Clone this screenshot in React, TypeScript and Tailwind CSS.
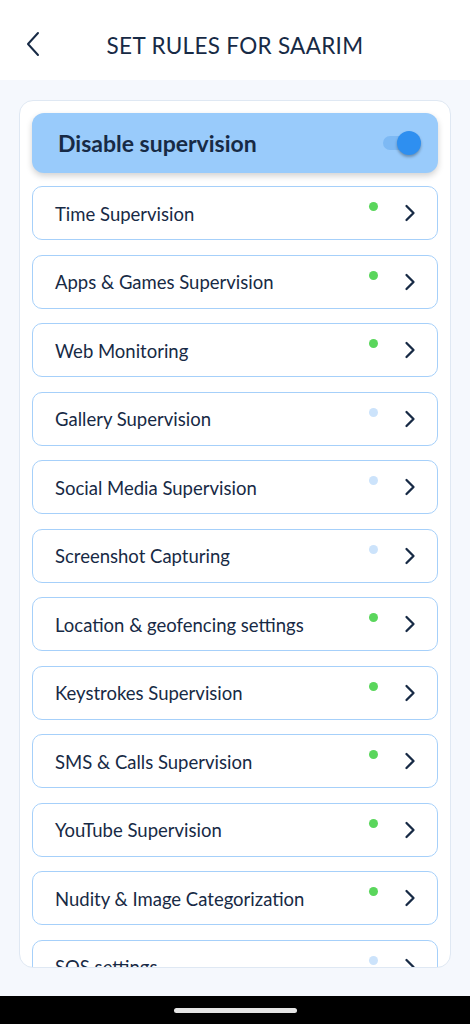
import React from 'react';

const rules = [
  { name: 'Time Supervision', active: true },
  { name: 'Apps & Games Supervision', active: true },
  { name: 'Web Monitoring', active: true },
  { name: 'Gallery Supervision', active: false },
  { name: 'Social Media Supervision', active: false },
  { name: 'Screenshot Capturing', active: false },
  { name: 'Location & geofencing settings', active: true },
  { name: 'Keystrokes Supervision', active: true },
  { name: 'SMS & Calls Supervision', active: true },
  { name: 'YouTube Supervision', active: true },
  { name: 'Nudity & Image Categorization', active: true },
  { name: 'SOS settings', active: false },
];

const Chevron = ({ className }: { className?: string }) => (
  <svg className={className} viewBox="0 0 12 18" fill="none" stroke="currentColor" strokeWidth="2.3" strokeLinecap="round" strokeLinejoin="round">
    <path d="M2.5 2l7 7-7 7" />
  </svg>
);

export default function App() {
  return (
    <div className="w-[470px] h-[1024px] flex flex-col bg-[#f5f8fd] text-[#172a45]" style={{ fontFamily: 'Lato, "Noto Sans", sans-serif' }}>
      {/* Header */}
      <div className="h-[80px] bg-white relative flex items-center justify-center shrink-0">
        <button className="absolute left-[22px] top-[31px] text-[#172a45]">
          <svg className="w-[24px] h-[26px]" viewBox="0 0 24 26" fill="none" stroke="currentColor" strokeWidth="2" strokeLinecap="round" strokeLinejoin="round">
            <path d="M16 2L6 13l10 11" />
          </svg>
        </button>
        <h1 className="text-[22.5px] tracking-[0.3px] mt-[11px]">SET RULES FOR SAARIM</h1>
      </div>

      {/* Body */}
      <div className="flex-1 px-[19px] pt-[20px] pb-[28px] min-h-0 flex flex-col">
        <div className="flex-1 min-h-0 bg-white border border-[#dfe8f3] rounded-[14px] overflow-hidden px-[12px] pt-[12px]">
          <div className="h-[60px] rounded-[12px] bg-[#99cbfb] shadow-[0_3px_6px_rgba(0,0,0,0.18)] flex items-center justify-between pl-[26px] pr-[17px]">
            <span className="text-[23px] font-bold">Disable supervision</span>
            <div className="relative w-[38px] h-[24px] flex items-center">
              <div className="w-[30px] h-[14px] rounded-full bg-[#7db9f4]" />
              <div className="absolute right-0 top-0 w-[24px] h-[24px] rounded-full bg-[#2e8ff0] shadow-[0_2px_3px_rgba(0,0,0,0.3)]" />
            </div>
          </div>

          <div className="mt-[13px] flex flex-col gap-[14.5px]">
            {rules.map((r) => (
              <div key={r.name} className="h-[54px] shrink-0 border border-[#a6d0fa] rounded-[10px] flex items-center pl-[22px] pr-[21px] relative">
                <span className="text-[18.5px] flex-1 pt-[3px]">{r.name}</span>
                <span className={`absolute left-[336px] top-[15px] w-[9px] h-[9px] rounded-full ${r.active ? 'bg-[#5ad65c]' : 'bg-[#cce3fb]'}`} />
                <Chevron className="w-[12px] h-[18px] text-[#172a45]" />
              </div>
            ))}
          </div>
        </div>
      </div>

      {/* Nav bar */}
      <div className="h-[28px] bg-black flex items-center justify-center shrink-0">
        <div className="w-[123px] h-[5px] rounded-full bg-[#e5e5e5]" />
      </div>
    </div>
  );
}
